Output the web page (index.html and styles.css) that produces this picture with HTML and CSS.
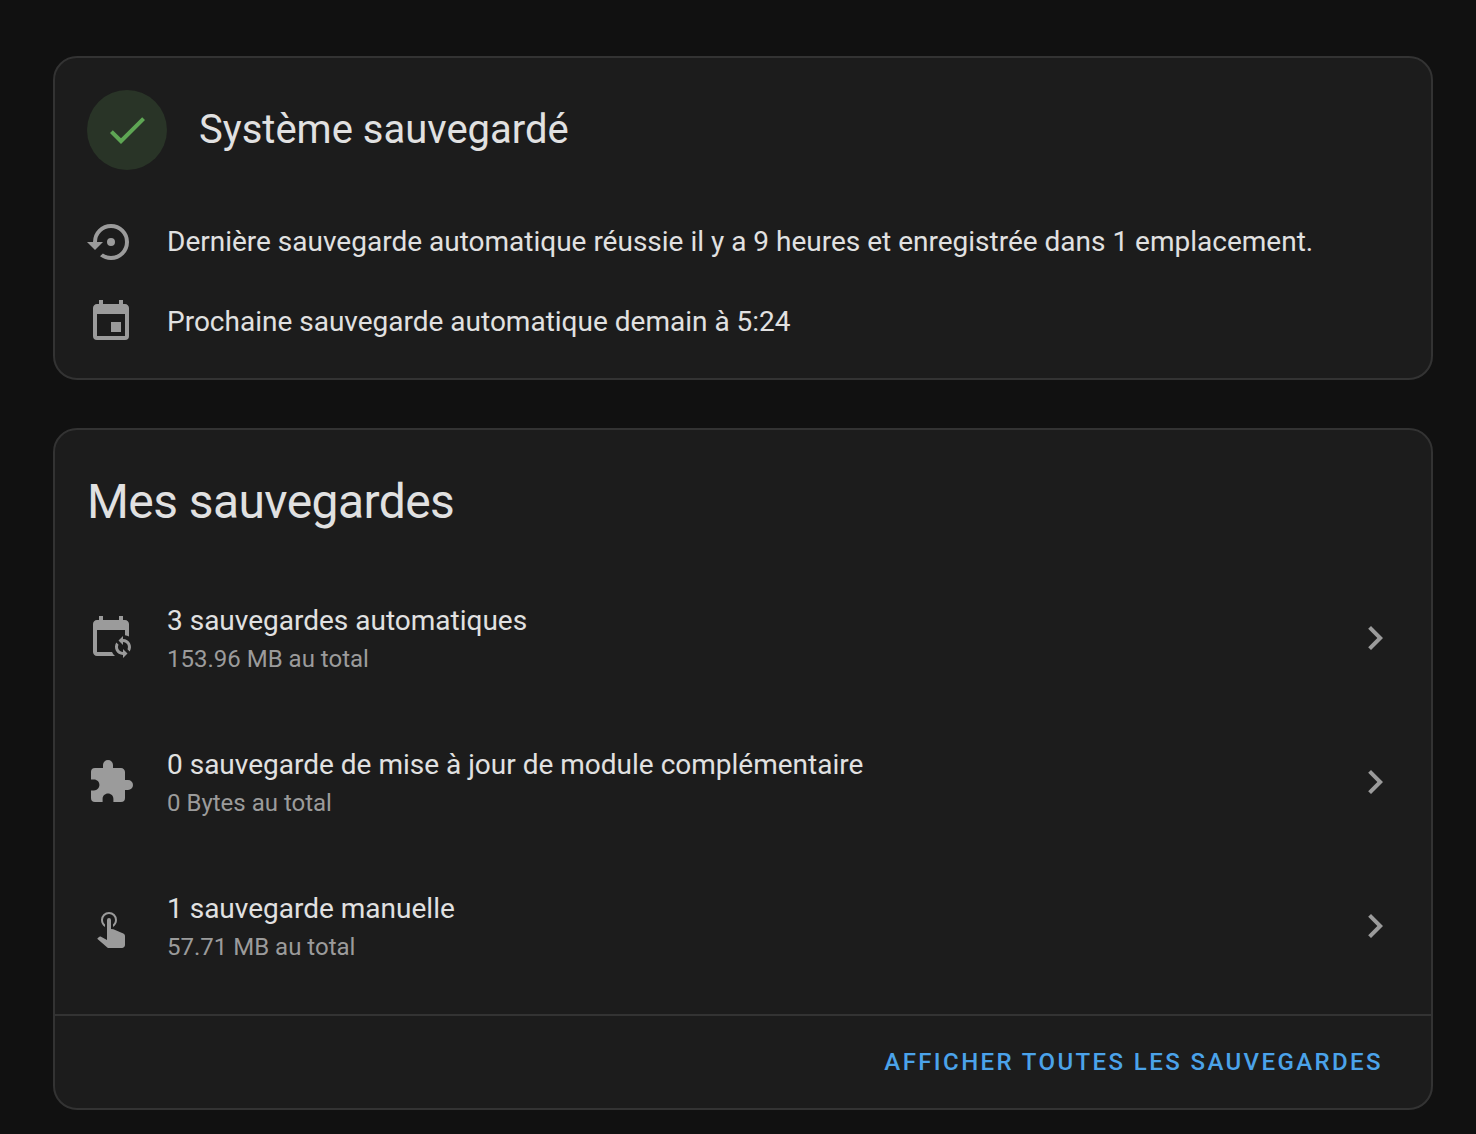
FILE: index.html
```html
<!DOCTYPE html>
<html lang="fr">
<head>
<meta charset="utf-8">
<meta name="viewport" content="width=device-width, initial-scale=1">
<title>Sauvegardes</title>
<link rel="stylesheet" href="styles.css">
</head>
<body>
<main class="page">
  <section class="card summary">
    <header class="summary-header">
      <span class="status">
        <svg class="icon" viewBox="0 0 24 24" aria-hidden="true"><path d="M21,7L9,19L3.5,13.5L4.91,12.09L9,16.17L19.59,5.59L21,7Z"/></svg>
      </span>
      <h2 class="summary-title">Système sauvegardé</h2>
    </header>
    <ul class="list">
      <li class="row row-short">
        <svg class="icon" viewBox="0 0 24 24" aria-hidden="true"><path d="M12,3A9,9 0 0,0 3,12H0L4,16L8,12H5A7,7 0 0,1 12,5A7,7 0 0,1 19,12A7,7 0 0,1 12,19C10.5,19 9.09,18.5 7.94,17.7L6.5,19.14C8.04,20.3 9.94,21 12,21A9,9 0 0,0 21,12A9,9 0 0,0 12,3M14,12A2,2 0 0,0 12,10A2,2 0 0,0 10,12A2,2 0 0,0 12,14A2,2 0 0,0 14,12Z"/></svg>
        <span class="primary">Dernière sauvegarde automatique réussie il y a 9 heures et enregistrée dans 1 emplacement.</span>
      </li>
      <li class="row row-short">
        <svg class="icon" viewBox="0 0 24 24" aria-hidden="true"><path d="M19,19H5V8H19M16,1V3H8V1H6V3H5C3.89,3 3,3.89 3,5V19A2,2 0 0,0 5,21H19A2,2 0 0,0 21,19V5C21,3.89 20.1,3 19,3H18V1M17,12H12V17H17V12Z"/></svg>
        <span class="primary">Prochaine sauvegarde automatique demain à 5:24</span>
      </li>
    </ul>
  </section>

  <section class="card">
    <h1 class="card-title">Mes sauvegardes</h1>
    <ul class="list backups">
      <li>
        <a class="row row-tall" href="#automatiques">
          <svg class="icon" viewBox="0 0 24 24" aria-hidden="true"><path d="M18 11V12.5C21.19 12.5 23.09 16.05 21.33 18.71L20.24 17.62C21.06 15.96 19.85 14 18 14V15.5L15.75 13.25L18 11M18 22V20.5C14.81 20.5 12.91 16.95 14.67 14.29L15.76 15.38C14.94 17.04 16.15 19 18 19V17.5L20.25 19.75L18 22M19 3H18V1H16V3H8V1H6V3H5C3.89 3 3 3.9 3 5V19C3 20.11 3.9 21 5 21H14C13.36 20.45 12.86 19.77 12.5 19H5V8H19V10.59C19.71 10.7 20.39 10.94 21 11.31V5C21 3.9 20.11 3 19 3Z"/></svg>
          <span class="text">
            <span class="primary">3 sauvegardes automatiques</span>
            <span class="secondary">153.96 MB au total</span>
          </span>
          <svg class="icon" viewBox="0 0 24 24" aria-hidden="true"><path d="M8.59,16.58L13.17,12L8.59,7.41L10,6L16,12L10,18L8.59,16.58Z"/></svg>
        </a>
      </li>
      <li>
        <a class="row row-tall" href="#modules">
          <svg class="icon" viewBox="0 0 24 24" aria-hidden="true"><path d="M20.5,11H19V7C19,5.89 18.1,5 17,5H13V3.5A2.5,2.5 0 0,0 10.5,1A2.5,2.5 0 0,0 8,3.5V5H4A2,2 0 0,0 2,7V10.8H3.5C5,10.8 6.2,12 6.2,13.5C6.2,15 5,16.2 3.5,16.2H2V20A2,2 0 0,0 4,22H7.8V20.5C7.8,19 9,17.8 10.5,17.8C12,17.8 13.2,19 13.2,20.5V22H17A2,2 0 0,0 19,20V16H20.5A2.5,2.5 0 0,0 23,13.5A2.5,2.5 0 0,0 20.5,11Z"/></svg>
          <span class="text">
            <span class="primary">0 sauvegarde de mise à jour de module complémentaire</span>
            <span class="secondary">0 Bytes au total</span>
          </span>
          <svg class="icon" viewBox="0 0 24 24" aria-hidden="true"><path d="M8.59,16.58L13.17,12L8.59,7.41L10,6L16,12L10,18L8.59,16.58Z"/></svg>
        </a>
      </li>
      <li>
        <a class="row row-tall" href="#manuelles">
          <svg class="icon" viewBox="0 0 24 24" aria-hidden="true"><path d="M10,9A1,1 0 0,1 11,8A1,1 0 0,1 12,9V13.47L13.21,13.6L18.15,15.79C18.68,16.03 19,16.56 19,17.14V21.5C18.97,22.32 18.32,22.97 17.5,23H11C10.62,23 10.26,22.85 10,22.57L5.1,18.37L5.84,17.6C6.03,17.39 6.3,17.28 6.58,17.28H6.8L10,19V9M11,5A4,4 0 0,1 15,9C15,10.5 14.2,11.77 13,12.46V11.24C13.61,10.69 14,9.89 14,9A3,3 0 0,0 11,6A3,3 0 0,0 8,9C8,9.89 8.39,10.69 9,11.24V12.46C7.8,11.77 7,10.5 7,9A4,4 0 0,1 11,5Z"/></svg>
          <span class="text">
            <span class="primary">1 sauvegarde manuelle</span>
            <span class="secondary">57.71 MB au total</span>
          </span>
          <svg class="icon" viewBox="0 0 24 24" aria-hidden="true"><path d="M8.59,16.58L13.17,12L8.59,7.41L10,6L16,12L10,18L8.59,16.58Z"/></svg>
        </a>
      </li>
    </ul>
    <footer class="card-actions">
      <button class="action" type="button">Afficher toutes les sauvegardes</button>
    </footer>
  </section>
</main>
</body>
</html>
```

FILE: styles.css
```css
* {
  box-sizing: border-box;
}

body {
  margin: 0;
  background: #111111;
  color: #e1e1e1;
  font-family: Roboto, "Liberation Sans", sans-serif;
  font-size: 28px;
}

.page {
  display: flex;
  flex-direction: column;
  gap: 48px;
  padding: 56px 43px 24px 53px;
}

.card {
  border: 2px solid #333333;
  border-radius: 24px;
  background: #1c1c1c;
}

.summary {
  padding: 32px 0 16px;
}

.summary-header {
  display: flex;
  align-items: center;
  gap: 32px;
  padding: 0 32px;
  margin-bottom: 32px;
}

.status {
  display: flex;
  align-items: center;
  justify-content: center;
  width: 80px;
  height: 80px;
  border-radius: 50%;
  background: #293427;
}

.status .icon {
  fill: #5ea654;
}

.icon {
  flex: none;
  width: 48px;
  height: 48px;
  fill: #9b9b9b;
}

.summary-title {
  margin: 0;
  font-size: 40px;
  font-weight: 400;
  line-height: 48px;
}

.list {
  margin: 0;
  padding: 0;
  list-style: none;
}

.row {
  display: flex;
  align-items: center;
  gap: 32px;
  padding: 0 32px;
  color: inherit;
  text-decoration: none;
}

.row-short {
  min-height: 80px;
}

.row-tall {
  min-height: 144px;
}

.text {
  display: flex;
  flex: 1;
  flex-direction: column;
}

.primary {
  line-height: 42px;
}

.secondary {
  color: #9b9b9b;
  font-size: 24px;
  line-height: 34px;
}

.card-title {
  margin: 0;
  padding: 24px 32px 16px;
  font-size: 48px;
  font-weight: 400;
  letter-spacing: -0.012em;
  line-height: 96px;
}

.backups {
  padding-bottom: 16px;
}

.card-actions {
  display: flex;
  justify-content: flex-end;
  padding: 10px 32px;
  border-top: 2px solid #333333;
}

.action {
  height: 72px;
  padding: 0 16px;
  border: 0;
  background: none;
  color: #4ba3ea;
  font: 500 24px/32px Roboto, "Liberation Sans", sans-serif;
  letter-spacing: 0.1em;
  text-transform: uppercase;
  cursor: pointer;
}
```
